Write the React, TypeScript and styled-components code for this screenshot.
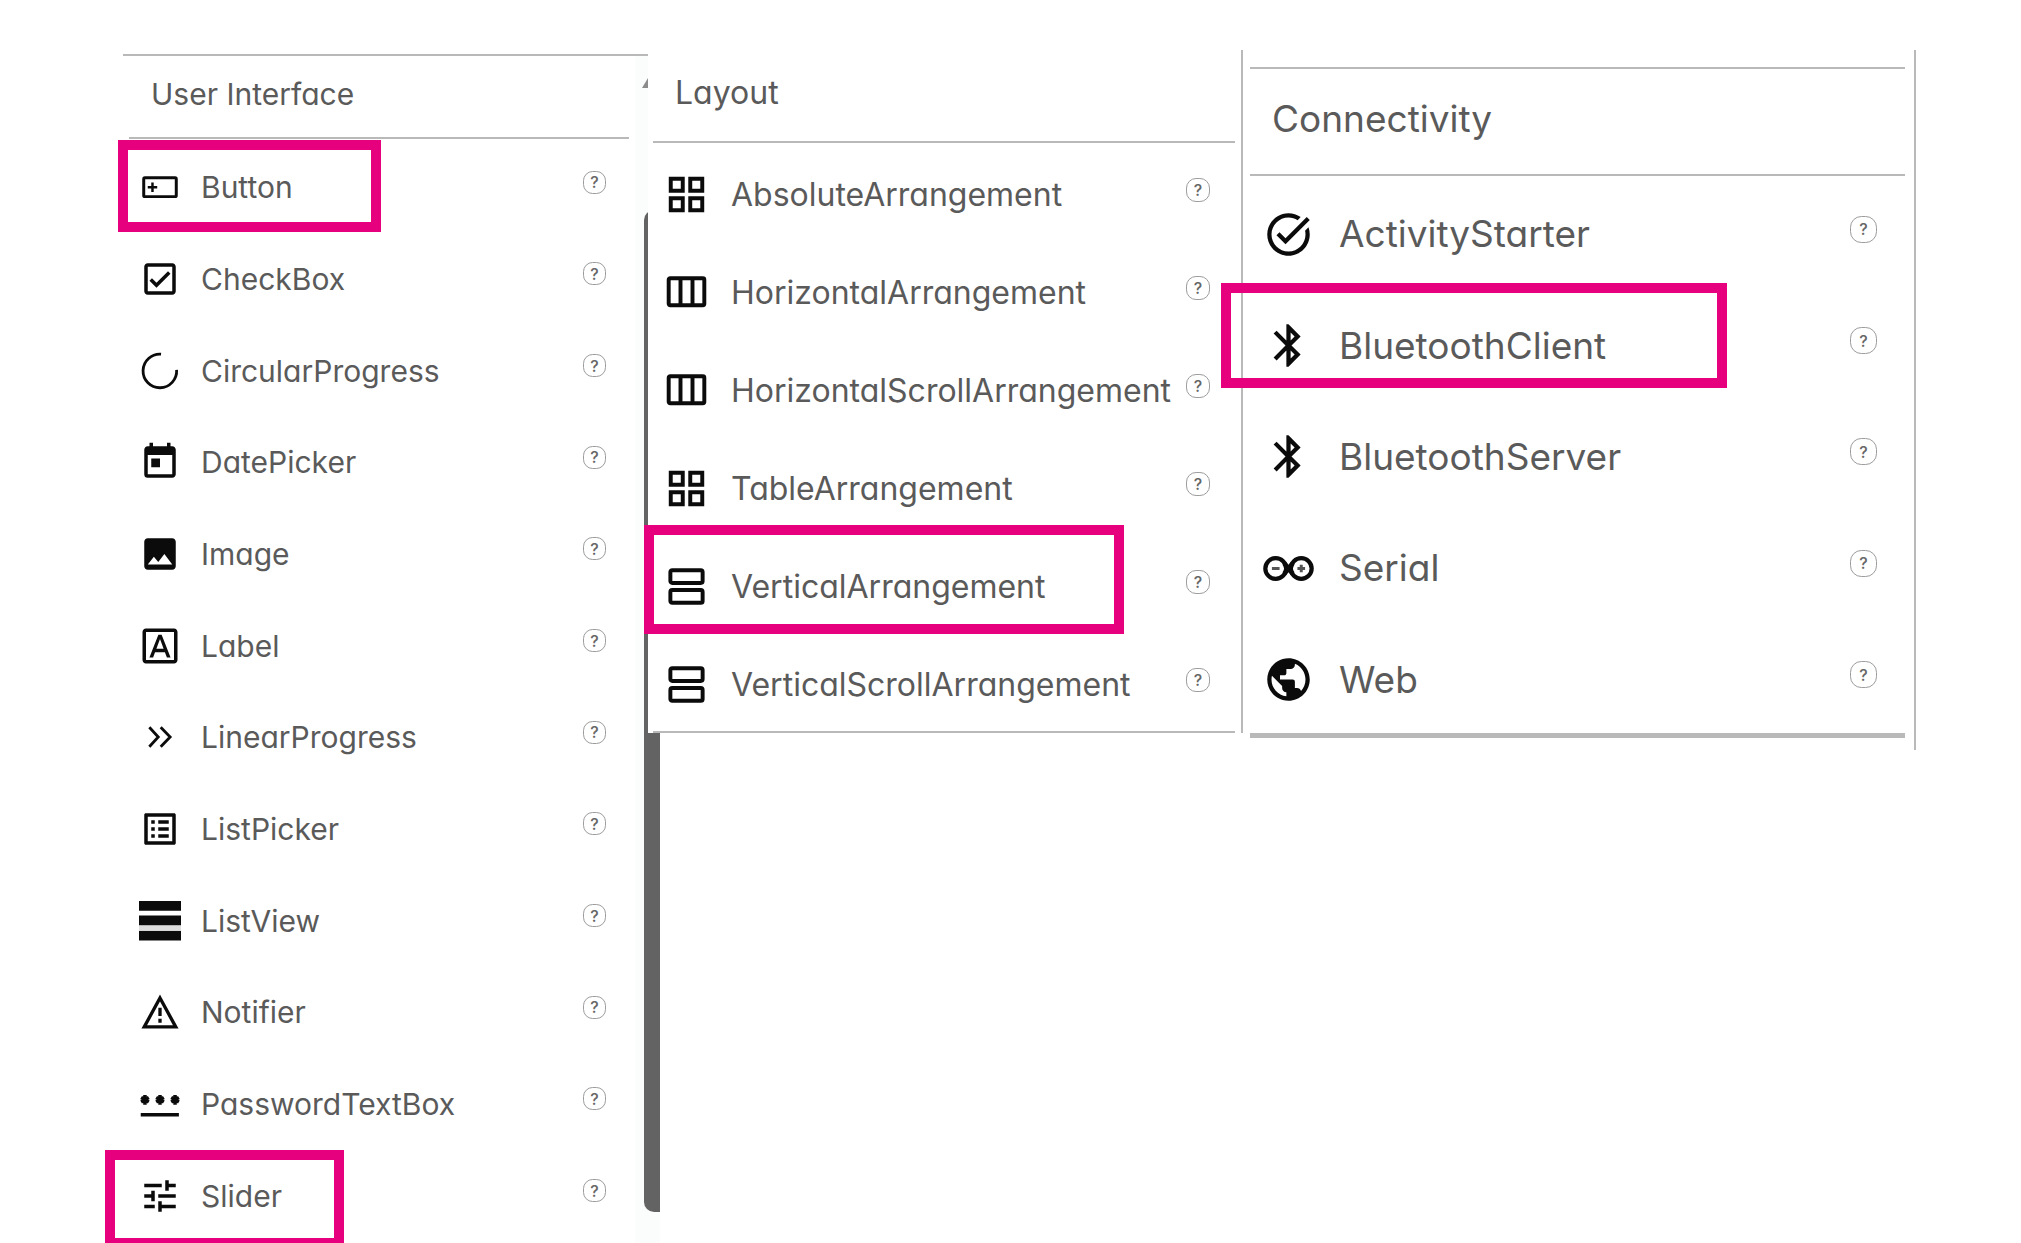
import React from "react";
import styled, { createGlobalStyle } from "styled-components";
import {
  MdBluetooth,
  MdImage,
  MdOutlineCheckBox,
  MdOutlineFontDownload,
  MdOutlineListAlt,
  MdPublic,
  MdTaskAlt,
  MdToday,
  MdTune,
} from "react-icons/md";

const GlobalStyle = createGlobalStyle`
  *, *::before, *::after { box-sizing: border-box; }
  body {
    margin: 0;
    background: #ffffff;
    color: #5a5a5a;
    font-family: Inter, "Open Sans", sans-serif;
    font-feature-settings: "cv11" 1;
  }
`;

const LINE = "#b9b9b9";
const ACCENT = "#e6007e";

type Scale = {
  font: number;
  icon: number;
  gap: number;
  help: number;
  listHeight: number;
  start: number;
  end: number;
};

const SMALL: Scale = { font: 30, icon: 42, gap: 20, help: 23, listHeight: 1100, start: 16, end: 29 };
const MEDIUM: Scale = { font: 32, icon: 45, gap: 22, help: 24, listHeight: 588, start: 16, end: 31 };
const LARGE: Scale = { font: 37, icon: 51, gap: 25, help: 27, listHeight: 557, start: 20, end: 37 };

const Page = styled.main`
  display: grid;
  grid-template-columns: 525fr 595fr 673fr;
  align-items: start;
  height: 100vh;
  padding: 50px 105px 0 123px;
  overflow: hidden;
`;

const ScrollPanel = styled.section`
  display: flex;
  align-self: stretch;
  margin: 4px -12px 0 0;
  border-top: 2px solid ${LINE};
`;

const ScrollContent = styled.div`
  flex: 1;
  min-width: 0;
`;

const Panel = styled.section<{ $top: number; $bottom: number }>`
  position: relative;
  padding: ${(p) => p.$top}px 0 ${(p) => p.$bottom}px;
  border-right: 2px solid ${LINE};
  background: #ffffff;
`;

const Header = styled.header<{ $height: number; $left: number; $right: number; $ruled?: boolean }>`
  display: flex;
  align-items: center;
  height: ${(p) => p.$height}px;
  margin: 0 ${(p) => p.$right}px 0 ${(p) => p.$left}px;
  padding: 0 22px 5px;
  border-top: ${(p) => (p.$ruled ? 2 : 0)}px solid ${LINE};
  border-bottom: 2px solid ${LINE};
`;

const Title = styled.h2<{ $size: number }>`
  margin: 0;
  font-size: ${(p) => p.$size}px;
  font-weight: 400;
  line-height: 40px;
  white-space: nowrap;
`;

const List = styled.ul<{ $scale: Scale }>`
  display: grid;
  grid-auto-rows: 1fr;
  min-height: ${(p) => p.$scale.listHeight}px;
  margin: 0;
  padding: 0;
  list-style: none;
`;

const Row = styled.li<{ $scale: Scale }>`
  position: relative;
  display: flex;
  align-items: center;
  justify-content: space-between;
  padding: 5px ${(p) => p.$scale.end}px 0 ${(p) => p.$scale.start}px;
`;

const ItemButton = styled.button<{ $scale: Scale }>`
  display: flex;
  align-items: center;
  gap: ${(p) => p.$scale.gap}px;
  min-width: 0;
  padding: 0;
  border: 0;
  background: none;
  color: inherit;
  font: inherit;
  font-size: ${(p) => p.$scale.font}px;
  font-weight: 400;
  font-feature-settings: inherit;
  line-height: 40px;
  white-space: nowrap;
  cursor: pointer;

  svg {
    flex: none;
    width: ${(p) => p.$scale.icon}px;
    height: ${(p) => p.$scale.icon}px;
    color: #0b0b0b;
  }
`;

const HelpButton = styled.button<{ $size: number }>`
  display: flex;
  flex: none;
  align-items: center;
  justify-content: center;
  width: ${(p) => p.$size}px;
  height: ${(p) => p.$size}px;
  margin-bottom: 10px;
  padding: 0;
  border: 1px solid #9c9c9c;
  border-radius: 42%;
  background: none;
  color: #666666;
  font: 500 16px/20px Inter, sans-serif;
  cursor: pointer;
`;

type Inset = { top: number; left: number; width: number; height: number };

const Highlight = styled.span<{ $box: Inset }>`
  position: absolute;
  top: ${(p) => p.$box.top}px;
  left: ${(p) => p.$box.left}px;
  width: ${(p) => p.$box.width}px;
  height: ${(p) => p.$box.height}px;
  border: 10px solid ${ACCENT};
  pointer-events: none;
`;

const Rule = styled.div<{ $weight: number; $left: number; $right: number }>`
  height: ${(p) => p.$weight}px;
  margin: 0 ${(p) => p.$right}px 0 ${(p) => p.$left}px;
  background: ${LINE};
`;

const Track = styled.div`
  display: flex;
  flex-direction: column;
  align-items: flex-end;
  width: 25px;
  padding: 17px 0 31px;
  background: #fbfdfd;

  svg {
    width: 18px;
    height: 15px;
  }
`;

const Thumb = styled.div`
  flex: 1;
  width: 16px;
  margin-top: 122px;
  border-radius: 10px 0 0 10px;
  background: #636363;
`;

const ButtonIcon = () => (
  <svg viewBox="0 0 24 24" fill="none" stroke="currentColor">
    <rect x="2.7" y="6.7" width="18.6" height="10.8" rx="0.7" strokeWidth="1.7" />
    <path d="M5 12.1h5.4M7.7 9.4v5.4" strokeWidth="1.4" />
  </svg>
);

const ProgressIcon = () => (
  <svg viewBox="0 0 24 24" fill="none" stroke="currentColor" strokeWidth="1.6">
    <path d="M12.6 2.4A9.6 9.6 0 1 0 21.5 11.4" />
  </svg>
);

const ChevronsIcon = () => (
  <svg viewBox="0 0 24 24" fill="none" stroke="currentColor" strokeWidth="1.6">
    <path d="M5.9 6.4 11 12l-5.1 5.6M12.4 6.4 17.8 12l-5.4 5.6" />
  </svg>
);

const BarsIcon = () => (
  <svg viewBox="0 0 24 24" fill="currentColor">
    <path d="M0 0.5h24v5.6H0zM0 8.9h24v5.6H0zM0 17.5h24v5.6H0z" />
    <path d="M0 14.5h24v3H0z" fill="#dddddd" />
  </svg>
);

const WarningIcon = () => (
  <svg viewBox="0 0 24 24" fill="none" stroke="currentColor" strokeWidth="1.9">
    <path d="M12 4 21 20.5H3z" />
    <path d="M12 9.5v4.800M12 15.900v2.200" />
  </svg>
);

const PasswordIcon = () => (
  <svg viewBox="0 0 24 24" fill="none" stroke="currentColor">
    <path d="M1 18.2h21.8" strokeWidth="2" />
    <path
      d="M3.4 6.8v5.6M1.2 8.3l4.4 2.6M5.6 8.3l-4.4 2.6M12 6.8v5.6M9.8 8.3l4.4 2.6M14.2 8.3l-4.4 2.6M20.6 6.8v5.6M18.400 8.3l4.4 2.6M22.800 8.3l-4.4 2.6"
      strokeWidth="2"
    />
  </svg>
);

const GridIcon = () => (
  <svg viewBox="0 0 24 24" fill="none" stroke="currentColor" strokeWidth="2.1">
    <path d="M3.6 3.6h6.4v6.4H3.6zM14 3.6h6.4v6.4H14zM3.6 14h6.4v6.4H3.6zM14 14h6.4v6.4H14z" />
  </svg>
);

const ColumnsIcon = () => (
  <svg viewBox="0 0 24 24" fill="none" stroke="currentColor" strokeWidth="2.1">
    <rect x="2.5" y="4.4" width="19" height="14.4" rx="0.8" />
    <path d="M8.8 4.4v14.4M15.2 4.4v14.4" />
  </svg>
);

const StackIcon = () => (
  <svg viewBox="0 0 24 24" fill="none" stroke="currentColor" strokeWidth="2.1">
    <rect x="3.4" y="3.3" width="17.2" height="6.8" rx="1" />
    <rect x="3.4" y="13.9" width="17.2" height="6.8" rx="1" />
  </svg>
);

const ArduinoIcon = () => (
  <svg viewBox="0 0 24 24" fill="none" stroke="currentColor" strokeWidth="2">
    <circle cx="6" cy="12" r="4.9" />
    <circle cx="18" cy="12" r="4.9" />
    <path d="M10 9.5 14 14.5M14 9.5 10 14.5" strokeWidth="2.2" />
    <path d="M4.2 12h3.6M16.2 12h3.6M18 10.2v3.6" strokeWidth="1.4" stroke="#555555" />
  </svg>
);

type Item = { name: string; icon: React.ComponentType; box?: Inset };

const USER_INTERFACE: Item[] = [
  { name: "Button", icon: ButtonIcon, box: { top: 1, left: -5, width: 263, height: 92 } },
  { name: "CheckBox", icon: MdOutlineCheckBox },
  { name: "CircularProgress", icon: ProgressIcon },
  { name: "DatePicker", icon: MdToday },
  { name: "Image", icon: MdImage },
  { name: "Label", icon: MdOutlineFontDownload },
  { name: "LinearProgress", icon: ChevronsIcon },
  { name: "ListPicker", icon: MdOutlineListAlt },
  { name: "ListView", icon: BarsIcon },
  { name: "Notifier", icon: WarningIcon },
  { name: "PasswordTextBox", icon: PasswordIcon },
  { name: "Slider", icon: MdTune, box: { top: 3, left: -18, width: 239, height: 98 } },
];

const LAYOUT: Item[] = [
  { name: "AbsoluteArrangement", icon: GridIcon },
  { name: "HorizontalArrangement", icon: ColumnsIcon },
  { name: "HorizontalScrollArrangement", icon: ColumnsIcon },
  { name: "TableArrangement", icon: GridIcon },
  { name: "VerticalArrangement", icon: StackIcon, box: { top: -10, left: -4, width: 480, height: 109 } },
  { name: "VerticalScrollArrangement", icon: StackIcon },
];

const CONNECTIVITY: Item[] = [
  { name: "ActivityStarter", icon: MdTaskAlt },
  { name: "BluetoothClient", icon: MdBluetooth, box: { top: -4, left: -22, width: 506, height: 105 } },
  { name: "BluetoothServer", icon: MdBluetooth },
  { name: "Serial", icon: ArduinoIcon },
  { name: "Web", icon: MdPublic },
];

function ComponentList({ items, scale }: { items: Item[]; scale: Scale }) {
  return (
    <List $scale={scale}>
      {items.map(({ name, icon: Icon, box }) => (
        <Row key={name} $scale={scale}>
          <ItemButton type="button" $scale={scale}>
            <Icon />
            {name}
          </ItemButton>
          <HelpButton type="button" $size={scale.help}>
            ?
          </HelpButton>
          {box && <Highlight $box={box} />}
        </Row>
      ))}
    </List>
  );
}

export default function App() {
  return (
    <>
      <GlobalStyle />
      <Page>
        <ScrollPanel>
          <ScrollContent>
            <Header $height={83} $left={6} $right={6}>
              <Title $size={SMALL.font}>User Interface</Title>
            </Header>
            <ComponentList items={USER_INTERFACE} scale={SMALL} />
          </ScrollContent>
          <Track>
            <svg viewBox="0 0 18 15" fill="#8c8c8c">
              <path d="M9 0l9 15H0z" />
            </svg>
            <Thumb />
          </Track>
        </ScrollPanel>

        <Panel $top={0} $bottom={0}>
          <Header $height={93} $left={5} $right={6}>
            <Title $size={MEDIUM.font}>Layout</Title>
          </Header>
          <ComponentList items={LAYOUT} scale={MEDIUM} />
          <Rule $weight={2} $left={5} $right={6} />
        </Panel>

        <Panel $top={17} $bottom={12}>
          <Header $height={109} $left={7} $right={9} $ruled>
            <Title $size={LARGE.font}>Connectivity</Title>
          </Header>
          <ComponentList items={CONNECTIVITY} scale={LARGE} />
          <Rule $weight={5} $left={7} $right={9} />
        </Panel>
      </Page>
    </>
  );
}
